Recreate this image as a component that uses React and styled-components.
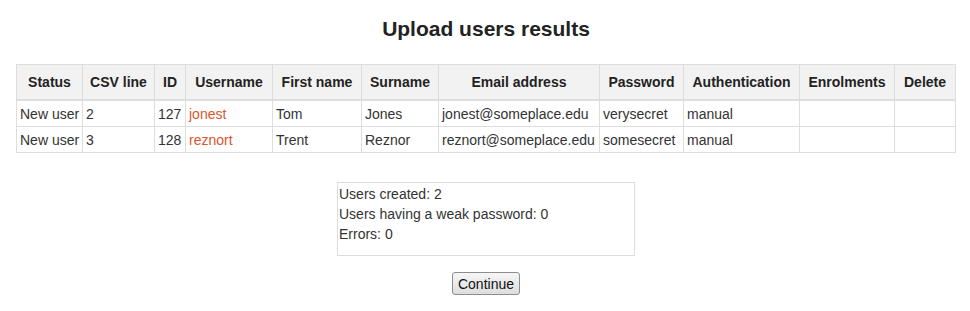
import { createGlobalStyle, styled } from "styled-components";

const GlobalStyle = createGlobalStyle`
  body {
    margin: 0;
    background: #fff;
    font-family: "Liberation Sans", Arial, sans-serif;
    font-size: 14px;
    color: #333;
  }
`;

const columns = [
  { title: "Status", width: 66 },
  { title: "CSV line", width: 72 },
  { title: "ID", width: 31 },
  { title: "Username", width: 87 },
  { title: "First name", width: 89 },
  { title: "Surname", width: 77 },
  { title: "Email address", width: 161 },
  { title: "Password", width: 84 },
  { title: "Authentication", width: 116 },
  { title: "Enrolments", width: 95 },
  { title: "Delete", width: 61 },
];

const users = [
  {
    status: "New user",
    line: 2,
    id: 127,
    username: "jonest",
    first: "Tom",
    last: "Jones",
    email: "jonest@someplace.edu",
    password: "verysecret",
    auth: "manual",
  },
  {
    status: "New user",
    line: 3,
    id: 128,
    username: "reznort",
    first: "Trent",
    last: "Reznor",
    email: "reznort@someplace.edu",
    password: "somesecret",
    auth: "manual",
  },
];

const App = () => {
  return (
    <>
      <GlobalStyle />
      <Page>
        <Heading>Upload users results</Heading>
        <Results>
          <colgroup>
            {columns.map((c) => (
              <col key={c.title} style={{ width: c.width }} />
            ))}
          </colgroup>
          <thead>
            <tr>
              {columns.map((c) => (
                <HeadCell key={c.title}>{c.title}</HeadCell>
              ))}
            </tr>
          </thead>
          <tbody>
            {users.map((u) => (
              <tr key={u.id}>
                <Cell>{u.status}</Cell>
                <Cell>{u.line}</Cell>
                <Cell>{u.id}</Cell>
                <Cell>
                  <UserLink href="#">{u.username}</UserLink>
                </Cell>
                <Cell>{u.first}</Cell>
                <Cell>{u.last}</Cell>
                <Cell>{u.email}</Cell>
                <Cell>{u.password}</Cell>
                <Cell>{u.auth}</Cell>
                <Cell />
                <Cell />
              </tr>
            ))}
          </tbody>
        </Results>
        <Summary>
          <div>Users created: 2</div>
          <div>Users having a weak password: 0</div>
          <div>Errors: 0</div>
        </Summary>
        <ContinueButton type="button">Continue</ContinueButton>
      </Page>
    </>
  );
};

const Page = styled.div`
  display: flex;
  flex-direction: column;
  align-items: center;
  padding: 17px 0 0 2px;
`;

const Heading = styled.h2`
  margin: 0 0 23px;
  font-size: 21px;
  line-height: 24px;
  font-weight: bold;
  color: #222;
`;

const Results = styled.table`
  width: 939px;
  table-layout: fixed;
  border-collapse: collapse;
  border: 1px solid #dddddd;
`;

const HeadCell = styled.th`
  height: 34px;
  padding: 0 4px;
  background: #f2f2f2;
  border: 1px solid #dddddd;
  border-bottom: 2px solid #dddddd;
  font-weight: bold;
  text-align: center;
  color: #222;
  white-space: nowrap;
`;

const Cell = styled.td`
  height: 25px;
  padding: 0 3px;
  border: 1px solid #dddddd;
  text-align: left;
  white-space: nowrap;
  color: #333;
`;

const UserLink = styled.a`
  color: #d9572b;
  text-decoration: none;
`;

const Summary = styled.div`
  box-sizing: border-box;
  width: 298px;
  height: 74px;
  margin-top: 29px;
  padding: 1px 1px;
  border: 1px solid #dddddd;
  line-height: 20px;
  color: #333;
`;

const ContinueButton = styled.button`
  margin-top: 16px;
  width: 68px;
  height: 23px;
  padding: 0;
  font-family: "Liberation Sans", Arial, sans-serif;
  font-size: 14px;
  color: #111;
  border: 1px solid #8e8e8e;
  border-radius: 3px;
  background: linear-gradient(#f6f6f6, #dddddd);
`;

export default App;
